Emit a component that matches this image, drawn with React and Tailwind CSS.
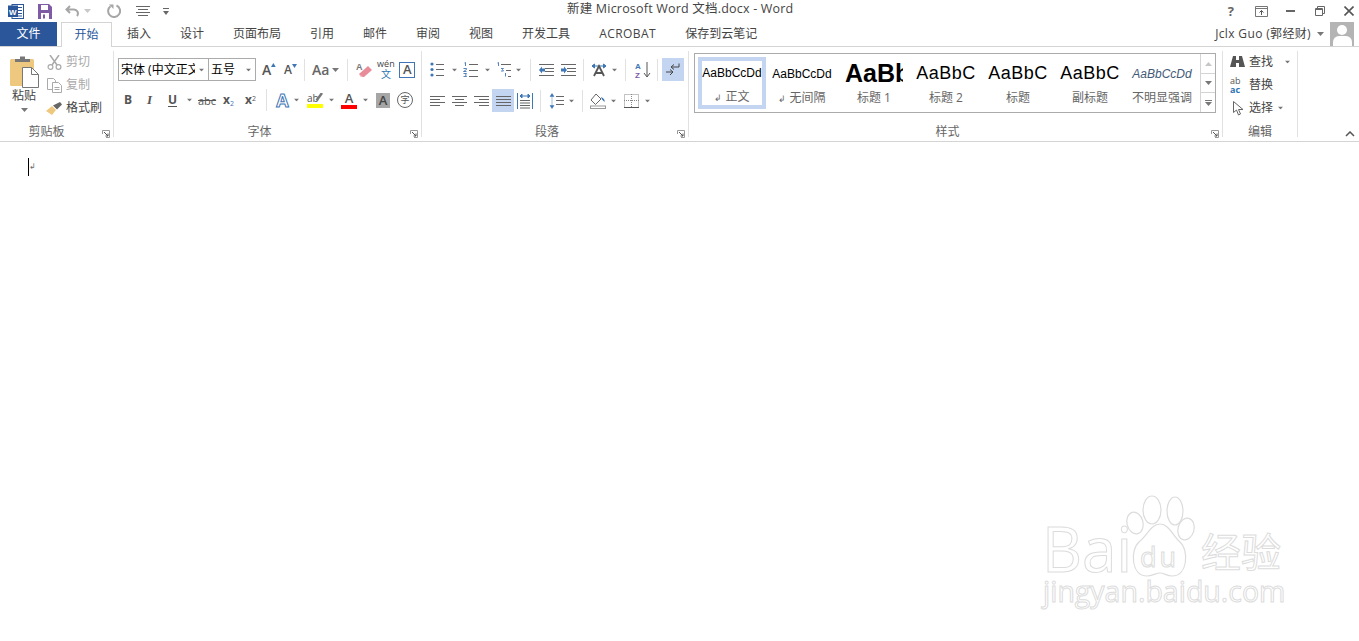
import React from "react";

const CJK = "font-['Open_Sans','Noto_Sans_CJK_SC',sans-serif]";

// small dropdown triangle used all over the ribbon
const Caret = ({ className = "" }) => (
  <svg width="7" height="4" viewBox="0 0 7 4" className={`shrink-0 ${className}`}>
    <path d="M0 0h7L3.5 4z" fill="#777" />
  </svg>
);

const Sep = ({ className = "" }) => (
  <div className={`h-[22px] w-px shrink-0 bg-[#e1e1e1] ${className}`} />
);

const Launcher = () => (
  <svg width="8" height="8" viewBox="0 0 8 8" className="absolute right-[3px] top-[6px]">
    <path d="M.5 4V.5H7.5V7.5H4" fill="none" stroke="#999" />
    <path d="M2 2l4 4M6 3.5V6H3.5" fill="none" stroke="#555" />
  </svg>
);

const Group = ({ label, className, labelClass = "pr-[16px]", launcher = true, children }) => (
  <div className={`flex h-[86px] shrink-0 flex-col border-r border-[#e1e1e1] ${className}`}>
    <div className="h-[73px]">{children}</div>
    <div className={`relative h-[13px] text-center text-[12px] leading-[15px] text-[#666] ${labelClass}`}>
      {label}
      {launcher && <Launcher />}
    </div>
  </div>
);

// horizontal lines, the base of every list / align icon
const Lines = ({ rows, w = 15, h = 14 }) => (
  <svg width={w} height={h} viewBox={`0 0 ${w} ${h}`} className="shrink-0">
    {rows.map(([x1, x2, y], i) => (
      <path key={i} d={`M${x1} ${y + 0.5}H${x2}`} stroke="#666" />
    ))}
  </svg>
);

const Bullets = () => (
  <svg width="15" height="15" viewBox="0 0 15 15" className="shrink-0">
    <circle cx="2" cy="2" r="1.6" fill="#3f76b5" />
    <circle cx="2" cy="7.5" r="1.6" fill="#3f76b5" />
    <circle cx="2" cy="13" r="1.6" fill="#3f76b5" />
    <path d="M6 2.500h8M6 7.500h8M6 13.500h8" stroke="#666" />
  </svg>
);

const Numbers = () => (
  <svg width="15" height="16" viewBox="0 0 15 16" className="shrink-0">
    <path d="M1.500 1l1-.5V4M.5 6.500h3v1l-3 2h3M.5 11.500h3l-1 1.500 1 1.500h-3" fill="none" stroke="#3f76b5" strokeWidth=".9" />
    <path d="M6 2.500h9M6 8.500h9M6 14.500h9" stroke="#666" />
  </svg>
);

const MultiLevel = () => (
  <svg width="16" height="16" viewBox="0 0 16 16" className="shrink-0">
    <path d="M1.500 1l1-.5V4M5 6.500h2.500l-1 1 1 1.500H5M9.500 11v3.500" fill="none" stroke="#3f76b5" strokeWidth=".9" />
    <path d="M5 2.500h10M10 8.500h5M12 14.500h3" stroke="#666" />
  </svg>
);

const Indent = ({ flip }) => (
  <svg width="16" height="12" viewBox="0 0 16 12" className="shrink-0">
    <path d="M1 .5h15M7 4.500h9M7 7.500h9M1 11.500h15" stroke="#666" />
    <path d={flip ? "M1 4.500h3V2.500l3 3.500-3 3.500V7.500H1z" : "M7 4.500H4V2.500L1 6l3 3.500V7.500h3z"} fill="#3f76b5" />
  </svg>
);

const IconA = ({ color = "#555", size = "text-[15px]" }) => (
  <span className={`font-['Open_Sans',sans-serif] font-semibold leading-none ${size}`} style={{ color }}>
    A
  </span>
);

const TitleBar = () => (
  <div className="relative flex h-[22px] items-center">
    <svg width="16" height="15" viewBox="0 0 16 15" className="ml-[8px]">
      <rect x="4" y="0.5" width="11.500" height="14" fill="#fff" stroke="#2b579a" />
      <path d="M10 3.500h4M10 6.500h4M10 9.500h4M10 12h4" stroke="#2b579a" />
      <rect x="0" y="1.500" width="10" height="11.500" fill="#2b579a" />
      <text x="1" y="10.500" fontSize="8" fontWeight="700" fill="#fff" fontFamily="Liberation Sans">W</text>
    </svg>
    <svg width="14" height="15" viewBox="0 0 14 15" className="ml-[14px]">
      <path d="M0 0h11l3 3v12H0z" fill="#7f5aa5" />
      <rect x="3" y="1" width="7" height="5" fill="#fff" />
      <rect x="3" y="9" width="8" height="6" fill="#fff" />
      <rect x="5" y="10.500" width="2" height="4" fill="#7f5aa5" />
    </svg>
    <svg width="14" height="13" viewBox="0 0 14 13" className="ml-[13px]">
      <path d="M5 1L1.500 4.500 5 8M2 4.500h6.500a4 4 0 0 1 3.500 6.500" fill="none" stroke="#a6a6a6" strokeWidth="2" />
    </svg>
    <Caret className="ml-[5px] opacity-40" />
    <svg width="14" height="14" viewBox="0 0 14 14" className="ml-[16px]">
      <path d="M3.500 2.200A6 6 0 1 0 9.500 1.500" fill="none" stroke="#a6a6a6" strokeWidth="2" />
      <path d="M2 .5h4.500V5z" fill="#a6a6a6" />
    </svg>
    <svg width="14" height="11" viewBox="0 0 14 11" className="ml-[15px]">
      <path d="M0 .5h14M2 3.500h10M0 6.500h14M2 9.500h10" stroke="#666" />
    </svg>
    <svg width="6" height="7" viewBox="0 0 6 7" className="ml-[13px]">
      <path d="M0 .5h6" stroke="#666" />
      <path d="M0 3h6L3 7z" fill="#666" />
    </svg>
    <div className="absolute left-[567px] top-[1px] whitespace-nowrap text-[12.5px] leading-[16px] tracking-[0.2px] text-[#444]">
      新建 Microsoft Word 文档.docx - Word
    </div>
    <div className="ml-auto flex items-center pr-[5px]">
      <span className="text-[13px] font-bold leading-none text-[#666]">?</span>
      <svg width="13" height="11" viewBox="0 0 13 11" className="ml-[21px]">
        <path d="M.5.5h12v10H.5zM.5 2.500h12" fill="none" stroke="#777" />
        <path d="M6.500 9V4.500M4.500 6.500l2-2 2 2" fill="none" stroke="#555" />
      </svg>
      <div className="ml-[18px] h-[2px] w-[9px] bg-[#666]" />
      <svg width="10" height="10" viewBox="0 0 10 10" className="ml-[20px]">
        <path d="M.5 2.500h7v7h-7zM.5 3.500h7M2.500 2V.5h7v7H8" fill="none" stroke="#666" />
      </svg>
      <svg width="10" height="10" viewBox="0 0 10 10" className="ml-[19px]">
        <path d="M.5.5l9 9M9.500.5l-9 9" stroke="#555" strokeWidth="1.6" />
      </svg>
    </div>
  </div>
);

const tabs = ["插入", "设计", "页面布局", "引用", "邮件", "审阅", "视图", "开发工具"];

const TabBar = () => (
  <div className="flex h-[25px] items-stretch border-b border-[#d4d4d4] text-[12px] text-[#444]">
    <div className="flex h-[24px] w-[57px] items-center justify-center bg-[#2b579a] text-white">文件</div>
    <div className="z-10 ml-[4px] flex h-[25px] w-[51px] items-center justify-center border border-b-0 border-[#d4d4d4] bg-white pb-[1px] text-[#2b579a]">
      开始
    </div>
    <div className="ml-[15px] flex h-[24px] items-center gap-[29px]">
      {tabs.map((t) => (
        <span key={t}>{t}</span>
      ))}
      <span className="tracking-[0.45px]">ACROBAT</span>
      <span>保存到云笔记</span>
    </div>
    <div className="ml-auto flex h-[24px] items-center pr-[5px]">
      <span className="text-[12px] tracking-[0.35px] text-[#444]">Jclx Guo (郭经财)</span>
      <Caret className="ml-[6px]" />
      <div className="ml-[6px] flex h-[24px] w-[24px] flex-col items-center overflow-hidden bg-[#b4b4b4]">
        <div className="mt-[3px] h-[11px] w-[10px] rounded-full bg-white" />
        <div className="mt-[1px] h-[12px] w-[19px] rounded-t-[6px] bg-white" />
      </div>
    </div>
  </div>
);

const Clipboard = () => (
  <Group label="剪贴板" className="w-[114px]" labelClass="pr-[20px]">
    <div className="flex pl-[11px] pt-[4px]">
      <div className="flex w-[26px] flex-col items-center">
        <svg width="29" height="33" viewBox="0 0 29 33" className="shrink-0">
          <rect x="0" y="4" width="24" height="27" rx="1.500" fill="#edc87e" />
          <path d="M5 7V4h5V1.500h5V4h5v3z" fill="#777" />
          <path d="M12.500 12.500h9l7 7v13h-16z" fill="#fff" stroke="#777" />
          <path d="M21.500 12.500v7h7" fill="none" stroke="#777" />
        </svg>
        <span className="whitespace-nowrap text-[12px] leading-[16px] text-[#444]">粘贴</span>
        <Caret className="mt-[4px]" />
      </div>
      <div className="-mt-[2px] ml-[10px] flex flex-col gap-[5px] text-[12px] leading-[18px]">
        <div className="flex items-center gap-[4px] text-[#aaa]">
          <svg width="15" height="15" viewBox="0 0 15 15">
            <path d="M3 0l7 10M12 0L5 10" stroke="#aaa" strokeWidth="1.500" />
            <circle cx="3.500" cy="12" r="2.400" fill="none" stroke="#aaa" strokeWidth="1.200" />
            <circle cx="11.500" cy="12" r="2.400" fill="none" stroke="#aaa" strokeWidth="1.200" />
          </svg>
          剪切
        </div>
        <div className="flex items-center gap-[4px] text-[#aaa]">
          <svg width="15" height="15" viewBox="0 0 15 15">
            <path d="M.5.5h6l2 2v9h-8z" fill="#fff" stroke="#aaa" />
            <path d="M5.500 4.500h6l3 3v7h-9z" fill="#fff" stroke="#aaa" />
            <path d="M7.500 9.500h5M7.500 11.500h5" stroke="#aaa" />
          </svg>
          复制
        </div>
        <div className="-ml-[1px] flex items-center gap-[4px] text-[#444]">
          <svg width="16" height="13" viewBox="0 0 16 13">
            <path d="M0 9l6-5 4 4-4 5z" fill="#edc87e" />
            <path d="M7 3.500l4 4 5-5-2-2.500z" fill="#666" />
          </svg>
          格式刷
        </div>
      </div>
    </div>
  </Group>
);

const Font = () => (
  <Group label="字体" className="w-[308px]">
    <div className="flex h-[25px] items-center pl-[4px] pt-[12px]">
      <div className="flex h-[23px] w-[91px] items-center overflow-hidden border border-[#ababab] pl-[2px] text-[12px] text-black">
        <span className="w-[74px] overflow-hidden whitespace-nowrap">宋体 (中文正文)</span>
        <Caret className="ml-[3px] scale-75" />
      </div>
      <div className="-ml-px flex h-[23px] w-[48px] items-center border border-[#ababab] pl-[2px] text-[12px] text-black">
        <span className="w-[32px]">五号</span>
        <Caret className="ml-[2px] scale-75" />
      </div>
      <div className="ml-[6px] flex w-[14px] items-end">
        <IconA size="text-[14px]" />
        <svg width="5" height="4" viewBox="0 0 5 4" className="mb-[10px]"><path d="M0 4h5L2.500 0z" fill="#3f76b5" /></svg>
      </div>
      <div className="ml-[8px] flex w-[14px] items-end">
        <IconA size="text-[12px]" />
        <svg width="5" height="4" viewBox="0 0 5 4" className="mb-[8px]"><path d="M0 0h5L2.500 4z" fill="#3f76b5" /></svg>
      </div>
      <Sep className="ml-[6px]" />
      <span className="ml-[7px] font-['Open_Sans',sans-serif] text-[14px] font-semibold text-[#666]">Aa</span>
      <Caret className="ml-[3px]" />
      <Sep className="ml-[8px]" />
      <svg width="16" height="16" viewBox="0 0 16 16" className="ml-[8px]">
        <path d="M3 12l9-8 4 4-8 7H5z" fill="#e88c99" />
        <path d="M3 12l4 3H5z" fill="#f3c4cb" />
        <text x="0" y="8" fontSize="9" fill="#777" fontFamily="Liberation Sans" fontWeight="700">A</text>
      </svg>
      <div className="ml-[6px] flex w-[15px] flex-col items-center">
        <span className="text-[9px] leading-[10px] text-[#444]">wén</span>
        <span className="text-[10px] leading-[11px] text-[#2f75b5]">文</span>
      </div>
      <div className="ml-[6px] flex h-[16px] w-[16px] items-center justify-center border border-[#3f76b5]">
        <IconA size="text-[13px]" />
      </div>
    </div>
    <div className="mt-[13px] flex h-[22px] items-center pl-[10px]">
      <span className="w-[9px] text-[12px] font-bold text-[#555]">B</span>
      <span className="ml-[14px] w-[8px] font-['Liberation_Serif',serif] text-[13px] font-bold italic text-[#555]">I</span>
      <span className="ml-[13px] w-[9px] border-b border-[#555] text-[12px] font-bold leading-[13px] text-[#555]">U</span>
      <Caret className="ml-[9px] scale-75" />
      <span className="ml-[5px] w-[17px] text-[11px] leading-none text-[#555] line-through">abc</span>
      <span className="ml-[8px] w-[12px] text-[12px] font-bold leading-none text-[#555]">x<sub className="text-[7px] font-normal text-[#3f76b5]">2</sub></span>
      <span className="ml-[10px] w-[13px] text-[12px] font-bold leading-none text-[#555]">x<sup className="text-[7px] font-normal text-[#555]">2</sup></span>
      <Sep className="ml-[8px]" />
      <span className="ml-[8px] w-[15px] text-center font-['Open_Sans',sans-serif] text-[18px] font-bold leading-none text-white [-webkit-text-stroke:1px_#3f76b5]">A</span>
      <Caret className="ml-[3px] scale-75" />
      <div className="relative ml-[7px] flex w-[16px] flex-col items-start">
        <span className="text-[10px] leading-[11px] text-[#555]">ab</span>
        <svg width="8" height="10" viewBox="0 0 8 10" className="absolute right-0 top-0">
          <path d="M7 0L1.500 7.500" stroke="#777" strokeWidth="2.500" />
        </svg>
        <div className="h-[4px] w-[16px] bg-[#ffff00]" />
      </div>
      <Caret className="ml-[5px] scale-75" />
      <div className="ml-[6px] flex w-[16px] flex-col items-center">
        <IconA size="text-[13px]" />
        <div className="h-[4px] w-[16px] bg-[#ff0000]" />
      </div>
      <Caret className="ml-[5px] scale-75" />
      <div className="ml-[7px] flex h-[15px] w-[14px] items-center justify-center bg-[#a6a6a6]">
        <IconA size="text-[13px]" color="#444" />
      </div>
      <div className="ml-[7px] flex h-[16px] w-[16px] items-center justify-center rounded-full border border-[#666] text-[9px] text-[#555]">字</div>
    </div>
  </Group>
);

const Paragraph = () => (
  <Group label="段落" className="w-[267px]">
    <div className="flex h-[25px] items-center pl-[8px] pt-[12px]">
      <Bullets />
      <Caret className="ml-[6px] scale-75" />
      <div className="ml-[5px]"><Numbers /></div>
      <Caret className="ml-[6px] scale-75" />
      <div className="ml-[5px]"><MultiLevel /></div>
      <Caret className="ml-[3px] scale-75" />
      <Sep className="ml-[8px]" />
      <div className="ml-[7px]"><Indent /></div>
      <div className="ml-[6px]"><Indent flip /></div>
      <Sep className="ml-[7px]" />
      <svg width="16" height="14" viewBox="0 0 16 14" className="ml-[7px] shrink-0">
        <path d="M1 3h14M1 3l2.500-2v4zM15 3l-2.500-2v4z" fill="#3f76b5" stroke="#3f76b5" />
        <path d="M3 13l5-10 5 10M5 10h6" fill="none" stroke="#555" strokeWidth="1.800" />
      </svg>
      <Caret className="ml-[4px] scale-75" />
      <Sep className="ml-[7px]" />
      <svg width="16" height="16" viewBox="0 0 16 16" className="ml-[9px] shrink-0">
        <text x="0" y="7" fontSize="8" fontWeight="700" fill="#3f76b5" fontFamily="Liberation Sans">A</text>
        <text x="0" y="15.500" fontSize="8" fontWeight="700" fill="#7f5aa5" fontFamily="Liberation Sans">Z</text>
        <path d="M12 0v14M9 11l3 4 3-4" fill="none" stroke="#555" />
      </svg>
      <Sep className="ml-[6px]" />
      <div className="ml-[4px] flex h-[23px] w-[22px] shrink-0 items-center justify-center bg-[#c3d5f0]">
        <svg width="14" height="13" viewBox="0 0 14 13">
          <path d="M13 .5V4H6M8 1.500L5 4l3 2.500" fill="none" stroke="#444" />
          <path d="M0 9h6M4 6.500L7 9l-3 3" fill="none" stroke="#444" />
        </svg>
      </div>
    </div>
    <div className="mt-[13px] flex h-[23px] items-center pl-[8px]">
      <Lines rows={[[0, 15, 1], [0, 10, 4], [0, 15, 7], [0, 10, 10]]} h={12} />
      <div className="ml-[7px]"><Lines rows={[[0, 15, 1], [3, 12, 4], [0, 15, 7], [3, 12, 10]]} h={12} /></div>
      <div className="ml-[7px]"><Lines rows={[[0, 15, 1], [5, 15, 4], [0, 15, 7], [5, 15, 10]]} h={12} /></div>
      <div className="ml-[3px] flex h-[23px] w-[22px] items-center justify-center bg-[#c3d5f0]">
        <Lines rows={[[0, 15, 1], [0, 15, 4], [0, 15, 7], [0, 15, 10]]} h={12} />
      </div>
      <svg width="16" height="16" viewBox="0 0 16 16" className="ml-[3px] shrink-0">
        <path d="M.5 0v16M15.500 0v16" stroke="#3f76b5" />
        <path d="M3 3h10M3 3l2-2v4zM13 3l-2-2v4z" fill="#3f76b5" stroke="#3f76b5" />
        <path d="M3 7.500h10M3 10h10M3 12.500h10M3 15h10" stroke="#666" />
      </svg>
      <Sep className="ml-[7px]" />
      <svg width="15" height="16" viewBox="0 0 15 16" className="ml-[8px] shrink-0">
        <path d="M3 1v14M1 3.500L3 .5l2 3zM1 12.500l2 3 2-3z" fill="#3f76b5" stroke="#3f76b5" strokeWidth=".5" />
        <path d="M7 3.500h8M7 7.500h8M7 11.500h8" stroke="#666" />
      </svg>
      <Caret className="ml-[4px] scale-75" />
      <Sep className="ml-[7px]" />
      <svg width="16" height="16" viewBox="0 0 16 16" className="ml-[7px] shrink-0">
        <path d="M6 1L1 7l4.500 4.500L11 6z" fill="#fff" stroke="#666" />
        <path d="M11 4c3 1 4 3 3.500 5L12 6.500z" fill="#3f76b5" />
        <rect x="0.500" y="13" width="15" height="2.500" fill="#fff" stroke="#999" />
      </svg>
      <Caret className="ml-[4px] scale-75" />
      <svg width="15" height="14" viewBox="0 0 15 14" className="ml-[7px] shrink-0">
        <path d="M.5.5h14v13H.5zM7.500 0v14M0 6.500h15" fill="none" stroke="#888" strokeDasharray="1 1" />
        <path d="M0 13.500h15" stroke="#555" />
      </svg>
      <Caret className="ml-[5px] scale-75" />
    </div>
  </Group>
);

const styleItems = [
  { text: "AaBbCcDd", label: "无间隔", mark: true, cls: "w-[60px] justify-center text-[12px] text-black" },
  { text: "AaBb", label: "标题 1", cls: "w-[58px] justify-start text-[25px] font-bold text-black" },
  { text: "AaBbC", label: "标题 2", cls: "w-[62px] justify-center text-[18px] tracking-[0.5px] text-black" },
  { text: "AaBbC", label: "标题", cls: "w-[62px] justify-center text-[18px] tracking-[0.5px] text-black" },
  { text: "AaBbC", label: "副标题", cls: "w-[62px] justify-center text-[18px] tracking-[0.5px] text-black" },
  { text: "AaBbCcDd", label: "不明显强调", cls: "w-[62px] justify-center text-[12px] italic text-[#445a78]" },
];

const StyleCell = ({ s }) => (
  <div className="flex h-[52px] w-[72px] shrink-0 flex-col items-center overflow-hidden">
    <div className={`flex h-[33px] items-center overflow-hidden whitespace-nowrap font-['Liberation_Sans',sans-serif] ${s.cls}`}>
      <span className="shrink-0">{s.text}</span>
    </div>
    <div className="whitespace-nowrap text-[12px] leading-[16px] text-[#666]">
      {s.mark && <span className="mr-[3px] text-[9px]">↲</span>}
      {s.label}
    </div>
  </div>
);

const Styles = () => (
  <Group label="样式" className="w-[534px]">
    <div className="ml-[5px] mt-[2px] flex h-[60px] w-[522px] border border-[#ababab]">
      <div className="flex flex-1 items-start overflow-hidden pl-[3px] pt-[3px]">
        <div className="flex h-[52px] w-[68px] shrink-0 flex-col items-center border-[4px] border-[#c3d5f0]">
          <div className="flex h-[25px] items-center whitespace-nowrap font-['Liberation_Sans',sans-serif] text-[12px] text-black">
            AaBbCcDd
          </div>
          <div className="mt-[4px] whitespace-nowrap text-[12px] leading-[15px] text-[#666]">
            <span className="mr-[3px] text-[9px]">↲</span>
            正文
          </div>
        </div>
        {styleItems.map((s, i) => (
          <StyleCell key={i} s={s} />
        ))}
      </div>
      <div className="flex w-[15px] flex-col border-l border-[#d4d4d4]">
        <div className="flex h-[20px] items-center justify-center border-b border-[#d4d4d4]">
          <svg width="7" height="4" viewBox="0 0 7 4"><path d="M0 4h7L3.500 0z" fill="#c6c6c6" /></svg>
        </div>
        <div className="flex h-[19px] items-center justify-center border-b border-[#d4d4d4]">
          <Caret />
        </div>
        <div className="flex flex-1 flex-col items-center justify-center gap-[1px]">
          <div className="h-px w-[7px] bg-[#777]" />
          <Caret />
        </div>
      </div>
    </div>
  </Group>
);

const Editing = () => (
  <Group label="编辑" className="w-[75px]" labelClass="" launcher={false}>
    <div className="flex flex-col gap-[5px] pl-[7px] pt-[2px] text-[12px] leading-[18px] text-[#444]">
      <div className="flex items-center gap-[4px]">
        <svg width="15" height="14" viewBox="0 0 15 14">
          <path d="M3 1h3v4h3V1h3l3 11H9V8H6v4H0z" fill="#555" />
        </svg>
        查找
        <Caret className="ml-[7px] scale-75" />
      </div>
      <div className="flex items-center gap-[4px]">
        <div className="flex w-[15px] flex-col text-[9px] leading-[9px]">
          <span className="text-[#555]">ab</span>
          <span className="font-bold text-[#2f75b5]">ac</span>
        </div>
        替换
      </div>
      <div className="flex items-center gap-[4px] pl-[3px]">
        <svg width="12" height="15" viewBox="0 0 12 15">
          <path d="M.5.5v11l3-2.500 2 5 2-1-2-4.500h4.500z" fill="#fff" stroke="#666" />
        </svg>
        选择
        <Caret className="scale-75" />
      </div>
    </div>
  </Group>
);

// faint site stamp lying over the empty document
const Watermark = () => (
  <div className="pointer-events-none absolute left-[1040px] top-[495px] h-[120px] w-[250px] select-none font-['Open_Sans',sans-serif] text-white [-webkit-text-stroke:1px_#dcdcdc]">
    <svg width="72" height="84" viewBox="0 0 72 84" className="absolute left-[84px] top-0" fill="none" stroke="#dcdcdc" strokeWidth="1.200">
      <ellipse cx="11" cy="28" rx="8" ry="11" transform="rotate(-15 11 28)" />
      <ellipse cx="28" cy="15" rx="9" ry="14" />
      <ellipse cx="51" cy="16" rx="8" ry="14" />
      <ellipse cx="62" cy="34" rx="8" ry="11" transform="rotate(15 62 34)" />
      <path d="M36 29c9 0 13 12 20 18 9 8 8 34-8 34-5 0-8-3-12-3s-8 3-13 3C7 81 6 55 15 47c8-6 12-18 21-18z" />
    </svg>
    <span className="absolute left-[2px] top-[22px] text-[62px] leading-[62px]">Bai</span>
    <span className="absolute left-[100px] top-[48px] text-[27px] leading-[27px] tracking-[3px]">du</span>
    <span className="absolute left-[161px] top-[33px] whitespace-nowrap font-['Noto_Sans_CJK_SC',sans-serif] text-[40px] leading-[44px]">经验</span>
    <span className="absolute left-[3px] top-[78px] whitespace-nowrap text-[28.500px] leading-[36px]">jingyan.baidu.com</span>
  </div>
);

const App = () => (
  <div className={`relative h-[641px] w-[1359px] overflow-hidden bg-white ${CJK}`}>
    <TitleBar />
    <TabBar />
    <div className="relative flex h-[95px] border-b border-[#d4d4d4] pt-[4px]">
      <Clipboard />
      <Font />
      <Paragraph />
      <Styles />
      <Editing />
      <svg width="10" height="6" viewBox="0 0 10 6" className="absolute right-[4px] top-[84px]">
        <path d="M1 5l4-4 4 4" fill="none" stroke="#555" strokeWidth="1.500" />
      </svg>
    </div>
    <div className="ml-[28px] mt-[16px] flex items-start">
      <div className="h-[18px] w-px bg-black" />
      <span className="mt-[3px] text-[8px] leading-[10px] text-[#666]">↲</span>
    </div>
    <Watermark />
  </div>
);

export default App;
